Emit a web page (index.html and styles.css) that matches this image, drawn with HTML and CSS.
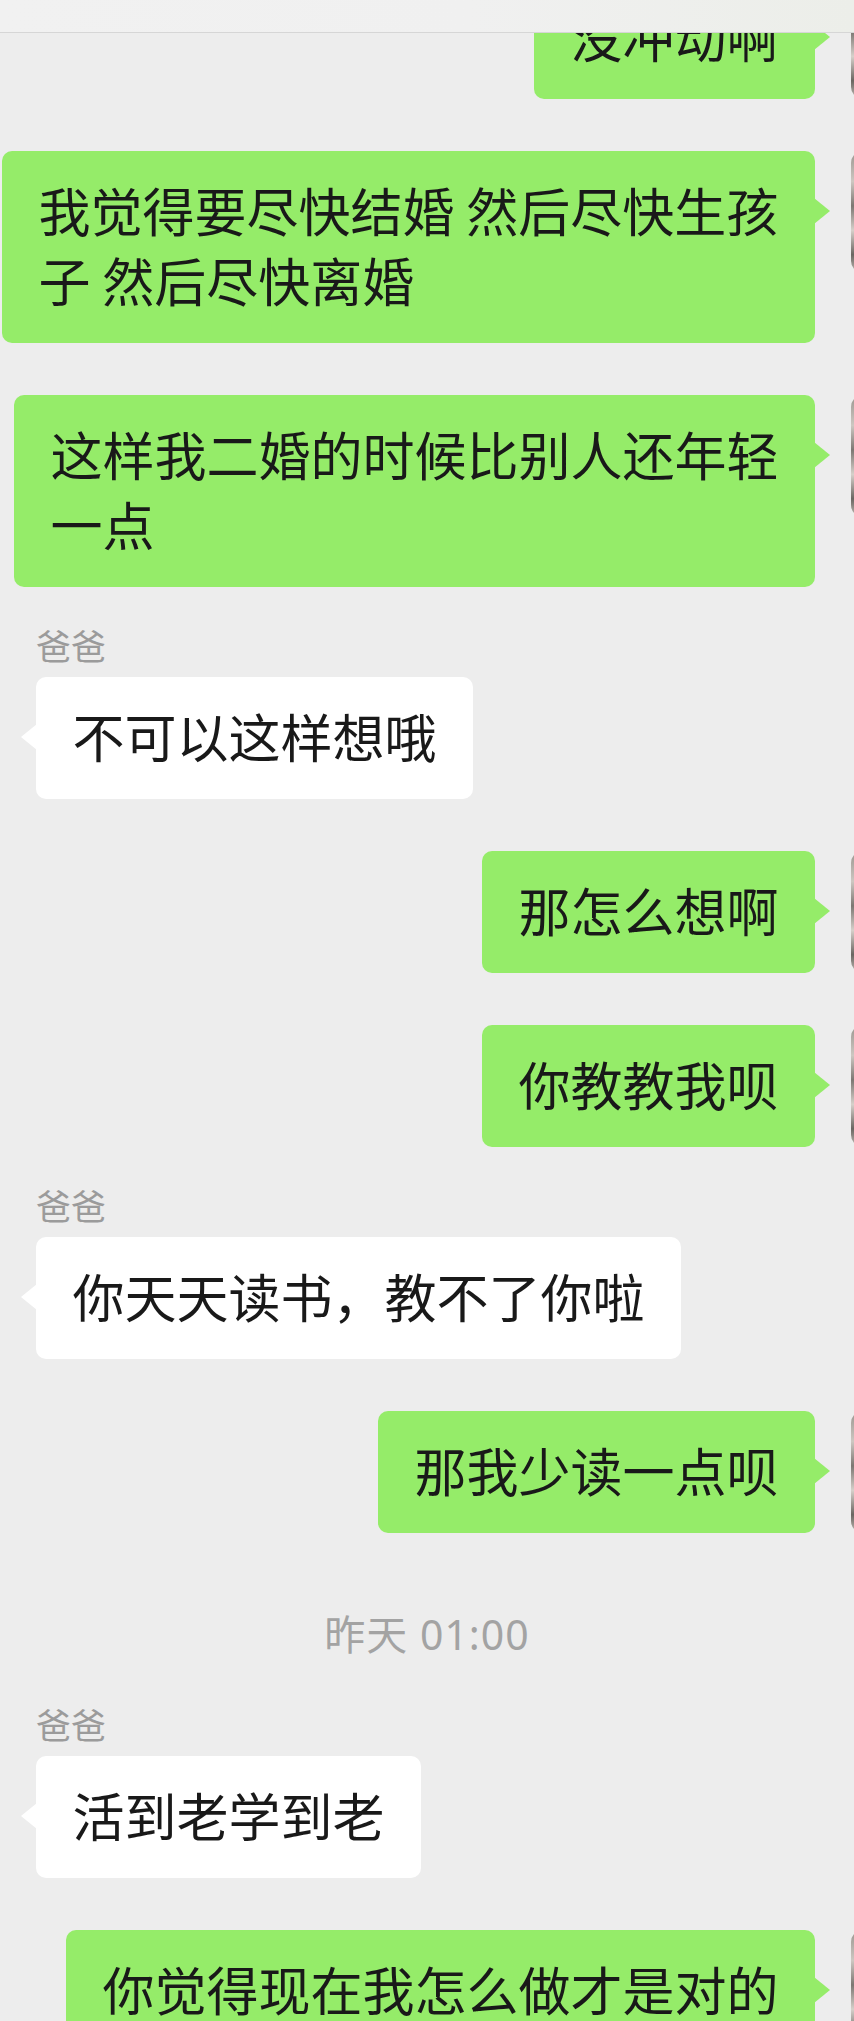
FILE: index.html
```html
<!DOCTYPE html>
<html lang="zh-CN">
<head>
<meta charset="utf-8">
<title>聊天</title>
<link rel="stylesheet" href="styles.css">
</head>
<body>
<header class="topbar"></header>
<main class="chat">
  <div class="row me"><div class="bubble">没冲动啊</div><div class="avatar"></div></div>
  <div class="row me"><div class="bubble fit-space">我觉得要尽快结婚 然后尽快生孩子 然后尽快离婚</div><div class="avatar"></div></div>
  <div class="row me"><div class="bubble fit-14">这样我二婚的时候比别人还年轻一点</div><div class="avatar"></div></div>
  <div class="row them named">
    <div class="name">爸爸</div>
    <div class="bubble">不可以这样想哦</div>
  </div>
  <div class="row me"><div class="bubble">那怎么想啊</div><div class="avatar"></div></div>
  <div class="row me"><div class="bubble">你教教我呗</div><div class="avatar"></div></div>
  <div class="row them named">
    <div class="name">爸爸</div>
    <div class="bubble">你天天读书，教不了你啦</div>
  </div>
  <div class="row me"><div class="bubble">那我少读一点呗</div><div class="avatar"></div></div>
  <div class="time">昨天 01:00</div>
  <div class="row them named after-time">
    <div class="name">爸爸</div>
    <div class="bubble">活到老学到老</div>
  </div>
  <div class="row me"><div class="bubble">你觉得现在我怎么做才是对的</div><div class="avatar"></div></div>
</main>
</body>
</html>
```
FILE: styles.css
```css
html, body {
  margin: 0;
  padding: 0;
  background: #ededed;
  overflow: hidden;
}
body {
  width: 854px;
  height: 2021px;
  font-family: "Noto Sans CJK SC", "Noto Sans", sans-serif;
  color: #191919;
}
.topbar {
  position: fixed;
  top: 0;
  left: 0;
  width: 854px;
  height: 32px;
  background: linear-gradient(to right, #f1f1f1 0%, #f0f0f0 55%, #eceee9 100%);
  border-bottom: 1px solid #d6d6d6;
  z-index: 5;
}
.chat {
  margin-top: -23px;
  overflow: hidden;
  display: flex;
  flex-direction: column;
}
.row {
  margin-top: 52px;
}
.row:first-child {
  margin-top: 0;
}
.row.named {
  margin-top: 38px;
}
.row.after-time {
  margin-top: 45px;
}
.me {
  display: flex;
  justify-content: flex-end;
  align-items: flex-start;
  gap: 36px;
  margin-right: -119px;
}
.them {
  display: flex;
  flex-direction: column;
  align-items: flex-start;
  padding-left: 36px;
}
.name {
  font-size: 35px;
  line-height: 40px;
  color: #9b9b9b;
  margin-bottom: 12px;
}
.bubble {
  position: relative;
  box-sizing: border-box;
  max-width: 815px;
  padding: 24px 36.5px 28px;
  font-size: 52px;
  line-height: 70px;
  border-radius: 10px;
  word-break: break-all;
}
.bubble.fit-space {
  max-width: calc(14em + 85px);
}
.bubble.fit-14 {
  max-width: calc(14em + 73px);
}
.me .bubble {
  background: #95ec69;
}
.them .bubble {
  background: #ffffff;
}
.me .bubble::after {
  content: "";
  position: absolute;
  top: 47px;
  right: -15px;
  border-top: 13px solid transparent;
  border-bottom: 13px solid transparent;
  border-left: 16px solid #95ec69;
}
.them .bubble::before {
  content: "";
  position: absolute;
  top: 47px;
  left: -15px;
  border-top: 13px solid transparent;
  border-bottom: 13px solid transparent;
  border-right: 16px solid #ffffff;
}
.avatar {
  flex: 0 0 122px;
  width: 122px;
  height: 122px;
  border-radius: 12px;
  background: linear-gradient(to bottom, #9a958f 0%, #cdc7c1 25%, #7c7772 45%, #d6d0ca 65%, #6a6661 85%, #c0bab4 100%);
}
.time {
  margin-top: 76px;
  text-align: center;
  font-family: "Noto Sans", "Noto Sans CJK SC", sans-serif;
  font-size: 41px;
  line-height: 50px;
  letter-spacing: 1px;
  color: #a3a3a3;
}
```
